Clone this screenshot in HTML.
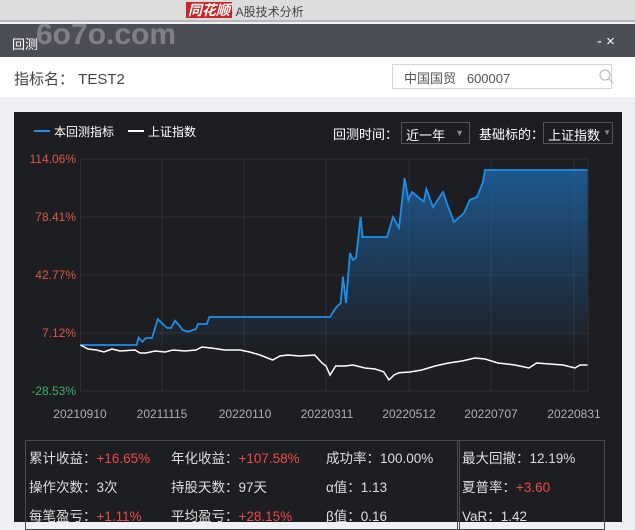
<!DOCTYPE html>
<html><head><meta charset="utf-8"><style>
*{margin:0;padding:0;box-sizing:border-box}
body{width:635px;height:522px;overflow:hidden;background:#eef0f5;font-family:"Liberation Sans","Noto Sans CJK SC",sans-serif;position:relative}
.a{position:absolute;white-space:nowrap}
.r{color:#f04848}
</style></head><body>
<div class="a" style="left:0;top:0;width:635px;height:22px;background:#dcdcdc;border-bottom:2px solid #b8b8b8"></div>
<div class="a" style="left:186px;top:2px;font-size:14px;font-weight:bold;font-style:italic;color:#fff;background:#c8262a;padding:0 2px;line-height:16px">同花顺</div>
<div class="a" style="left:229px;top:3px;font-size:12px;color:#444">- A股技术分析</div>
<div class="a" style="left:0;top:24px;width:635px;height:33px;background:#4b4e56"></div>
<div class="a" style="left:12px;top:34px;font-size:13px;color:#fff">回测</div>
<div class="a" style="left:36px;top:18px;font-size:30px;color:rgba(190,190,190,0.45);font-weight:bold">6o7o.com</div>
<div class="a" style="left:597px;top:33px;font-size:15px;color:#fff">- ×</div>
<div class="a" style="left:0;top:57px;width:635px;height:40px;background:#fff"></div>
<div class="a" style="left:14px;top:68px;font-size:15px;color:#444">指标名：  TEST2</div>
<div class="a" style="left:392px;top:64px;width:220px;height:25px;border:1px solid #d4d4d4;background:#fff"></div>
<div class="a" style="left:404px;top:68px;font-size:13px;color:#555">中国国贸 &nbsp; 600007</div>
<svg class="a" style="left:598px;top:68px" width="16" height="16"><circle cx="7" cy="7" r="5" fill="none" stroke="#bbb" stroke-width="1.2"/><path d="M11 11l4 4" stroke="#bbb" stroke-width="1.2"/></svg>
<div class="a" style="left:14px;top:112px;width:608px;height:410px;background:#1d1e22"></div>
<div class="a" style="left:34px;top:130px;width:16px;height:2px;background:#1e8ee6"></div>
<div class="a" style="left:54px;top:123px;font-size:12px;color:#fff">本回测指标</div>
<div class="a" style="left:128px;top:130px;width:16px;height:2px;background:#fff"></div>
<div class="a" style="left:148px;top:123px;font-size:12px;color:#fff">上证指数</div>
<div class="a" style="left:333px;top:124px;font-size:13px;color:#fff">回测时间：</div>
<div class="a" style="left:401px;top:122px;width:69px;height:22px;border:1px solid #555;color:#fff;font-size:13px;padding:2px 4px">近一年 <span style="color:#888;font-size:9px;position:absolute;right:5px;top:5px">▼</span></div>
<div class="a" style="left:479px;top:124px;font-size:13px;color:#fff">基础标的：</div>
<div class="a" style="left:543px;top:122px;width:70px;height:22px;border:1px solid #555;color:#fff;font-size:13px;padding:2px 4px">上证指数<span style="color:#888;font-size:8px;position:absolute;right:1px;top:5px">▼</span></div>
<svg class="a" style="left:0;top:0" width="635" height="440">
<defs><linearGradient id="g" x1="0" y1="0" x2="0" y2="1"><stop offset="0" stop-color="#1e70bb" stop-opacity="0.7"/><stop offset="1" stop-color="#1e6fb8" stop-opacity="0.03"/></linearGradient></defs>
<g stroke="#2e3036" stroke-width="1">
<path d="M80 159H588M80 217H588M80 275H588M80 333H588M80 391H588"/>
<path d="M80.5 159V391M162 159V391M244 159V391M326 159V391M409 159V391M491 159V391M574 159V391M588 159V391"/>
</g>
<polygon fill="url(#g)" points="80.5,345 136.7,345 138.6,337.7 142.5,341.7 146,338 152,338 157.8,319 161.6,323 167.3,328 171,328 175,320.7 178.8,325 182.6,330 188.4,331.7 196,329 198,324 206.8,324 209.4,317 330,317 335.7,308 340.7,303 343,276.7 346,303 350,253 353,260 356,258 357.5,245 360.6,216.7 362.5,237 387,237 393,217 399,228 404.6,178 408.4,200 412,192 418,197 423.7,201.7 426.4,189 433,207 443,192 448.6,208 454,222 464,213 469.7,200 477,197 483,182 485,170 587.5,170 587.5,345"/>
<polyline fill="none" stroke="#1e8ee6" stroke-width="1.8" points="80.5,345 136.7,345 138.6,337.7 142.5,341.7 146,338 152,338 157.8,319 161.6,323 167.3,328 171,328 175,320.7 178.8,325 182.6,330 188.4,331.7 196,329 198,324 206.8,324 209.4,317 330,317 335.7,308 340.7,303 343,276.7 346,303 350,253 353,260 356,258 357.5,245 360.6,216.7 362.5,237 387,237 393,217 399,228 404.6,178 408.4,200 412,192 418,197 423.7,201.7 426.4,189 433,207 443,192 448.6,208 454,222 464,213 469.7,200 477,197 483,182 485,170 587.5,170"/>
<polyline fill="none" stroke="#fff" stroke-width="1.5" points="80.5,345 88,349 96.5,350 104,352 112,349 120,351 135,350 140,353 146,353 155,351 165,352 173,350 185,351 196,350 202,347 211,348 225,350 240,350 249.6,352 260,355 272.6,360 280,356 288,355 300,356 314.7,355 322,363 326,366 330,375 335.7,366 345,366 353,365 365,368 375,369 383.6,371.7 389,380 394,375 399,372.7 410,372 421.8,370 435,366 448.6,363 462,361 475,358 485,359 498,363 515,365 529,368 536.6,363 550,364 563,365 575,368 580,365 587.5,365"/>
<g font-size="12" text-anchor="end">
<text x="76" y="163" fill="#d9584a">114.06%</text>
<text x="76" y="221" fill="#d9584a">78.41%</text>
<text x="76" y="279" fill="#d9584a">42.77%</text>
<text x="76" y="337" fill="#d9584a">7.12%</text>
<text x="76" y="395" fill="#3fae6a">-28.53%</text>
</g>
<g font-size="12" fill="#b0b0b0" text-anchor="middle">
<text x="80" y="418">20210910</text><text x="162" y="418">20211115</text><text x="245" y="418">20220110</text><text x="327" y="418">20220311</text><text x="409" y="418">20220512</text><text x="491" y="418">20220707</text><text x="574" y="418">20220831</text>
</g>
</svg>
<div class="a" style="left:25px;top:440px;width:435px;height:90px;border:1px solid #4a4c52"></div>
<div class="a" style="left:457px;top:440px;width:148px;height:90px;border:1px solid #4a4c52"></div>
<div class="a" style="font-size:13.5px;color:#ddd;left:29px;top:447px">累计收益：<span class="r">+16.65%</span></div>
<div class="a" style="font-size:13.5px;color:#ddd;left:171px;top:447px">年化收益：<span class="r">+107.58%</span></div>
<div class="a" style="font-size:13.5px;color:#ddd;left:326px;top:447px">成功率：100.00%</div>
<div class="a" style="font-size:13.5px;color:#ddd;left:462px;top:447px">最大回撤：12.19%</div>
<div class="a" style="font-size:13.5px;color:#ddd;left:29px;top:476px">操作次数：3次</div>
<div class="a" style="font-size:13.5px;color:#ddd;left:171px;top:476px">持股天数：97天</div>
<div class="a" style="font-size:13.5px;color:#ddd;left:326px;top:476px">α值：1.13</div>
<div class="a" style="font-size:13.5px;color:#ddd;left:462px;top:476px">夏普率：<span class="r">+3.60</span></div>
<div class="a" style="font-size:13.5px;color:#ddd;left:29px;top:505px">每笔盈亏：<span class="r">+1.11%</span></div>
<div class="a" style="font-size:13.5px;color:#ddd;left:171px;top:505px">平均盈亏：<span class="r">+28.15%</span></div>
<div class="a" style="font-size:13.5px;color:#ddd;left:326px;top:505px">β值：0.16</div>
<div class="a" style="font-size:13.5px;color:#ddd;left:462px;top:505px">VaR：1.42</div>
</body></html>
